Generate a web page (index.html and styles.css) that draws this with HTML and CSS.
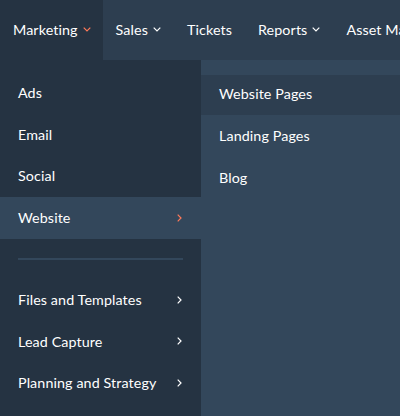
FILE: index.html
```html
<!DOCTYPE html>
<html>
<head>
<meta charset="utf-8">
<link rel="stylesheet" href="styles.css">
</head>
<body>
<div class="page">
  <nav class="topnav">
    <div class="nav-item active">Marketing <svg class="down" viewBox="0 0 8 5"><path d="M0.7 0.7 L4 4 L7.3 0.7"/></svg></div>
    <div class="nav-item">Sales <svg class="down" viewBox="0 0 8 5"><path d="M0.7 0.7 L4 4 L7.3 0.7"/></svg></div>
    <div class="nav-item">Tickets</div>
    <div class="nav-item">Reports <svg class="down" viewBox="0 0 8 5"><path d="M0.7 0.7 L4 4 L7.3 0.7"/></svg></div>
    <div class="nav-item">Asset Marketplace</div>
  </nav>
  <div class="dropdown">
    <ul class="menu">
      <li class="row">Ads</li>
      <li class="row">Email</li>
      <li class="row">Social</li>
      <li class="row selected">Website <svg class="right" viewBox="0 0 5 8"><path d="M0.7 0.7 L4 4 L0.7 7.3"/></svg></li>
      <li class="divider"><span></span></li>
      <li class="row">Files and Templates <svg class="right" viewBox="0 0 5 8"><path d="M0.7 0.7 L4 4 L0.7 7.3"/></svg></li>
      <li class="row">Lead Capture <svg class="right" viewBox="0 0 5 8"><path d="M0.7 0.7 L4 4 L0.7 7.3"/></svg></li>
      <li class="row">Planning and Strategy <svg class="right" viewBox="0 0 5 8"><path d="M0.7 0.7 L4 4 L0.7 7.3"/></svg></li>
    </ul>
    <ul class="submenu">
      <li class="row hover">Website Pages</li>
      <li class="row">Landing Pages</li>
      <li class="row">Blog</li>
    </ul>
  </div>
</div>
</body>
</html>
```

FILE: styles.css
```css
* { box-sizing: border-box; }
html, body { margin: 0; padding: 0; }
body {
  width: 400px;
  height: 416px;
  overflow: hidden;
  background: #33475b;
  font-family: "Lato", "Open Sans", sans-serif;
  font-size: 14px;
  color: #ffffff;
  -webkit-font-smoothing: antialiased;
}
.page { width: 400px; height: 416px; display: flex; flex-direction: column; overflow: hidden; }
.topnav {
  height: 60px;
  background: #2d3e50;
  display: flex;
  align-items: stretch;
  white-space: nowrap;
  flex: none;
  overflow: hidden;
}
.nav-item {
  display: flex;
  align-items: center;
  gap: 5px;
  padding: 0 13px 2px;
  font-size: 14.3px;
  letter-spacing: 0.1px;
  flex: none;
}
.nav-item.active { background: #253342; padding-right: 12px; }
.down { width: 8px; height: 5px; fill: none; stroke: #ffffff; stroke-width: 1.2; margin-top: 1px; }
.nav-item.active .down { stroke: #ff7a59; }
.dropdown { flex: 1; display: flex; }
.menu, .submenu { list-style: none; margin: 0; }
.menu {
  width: 201px;
  background: #253342;
  padding: 12.5px 0 0;
}
.submenu {
  flex: 1;
  background: #33475b;
  padding: 14.5px 0 0;
}
.row {
  height: 41.5px;
  display: flex;
  align-items: center;
  justify-content: space-between;
  padding: 0 18px 1px;
  font-size: 14.3px;
  letter-spacing: 0.1px;
}
.submenu .row { height: 41px; }
.submenu .row + .row { height: 41.5px; }
.row.selected { background: #33475b; padding-bottom: 0; }
.row.hover { background: #2d3e50; height: 40.5px; margin-bottom: 0.5px; padding-bottom: 2px; }
.right { width: 5px; height: 8px; fill: none; stroke: #ffffff; stroke-width: 1.2; margin-right: 1px; }
.selected .right { stroke: #ff7a59; }
.divider { height: 41px; display: flex; align-items: center; padding: 0 18px; }
.divider span { display: block; width: 100%; height: 2px; background: #33475b; }
```
